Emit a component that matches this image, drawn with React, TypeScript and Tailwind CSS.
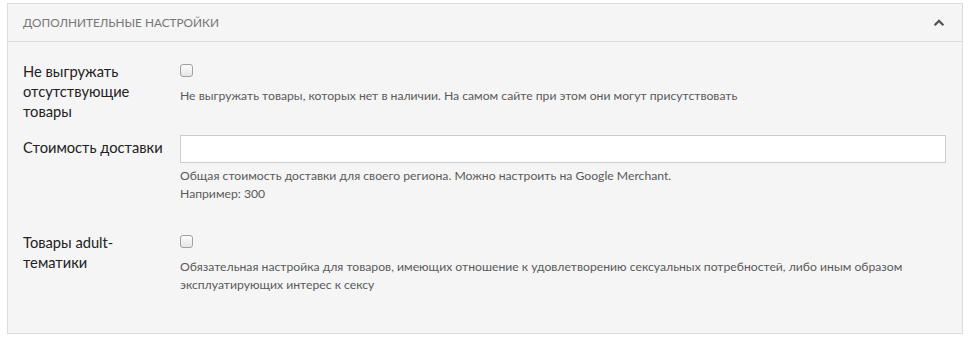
import React from 'react';

const ChevronUp: React.FC = () => (
    <svg width="12" height="9" viewBox="0 0 12 9" className="text-[#555]">
        <path d="M6 1.2 L11.2 6.4 L9.6 8 L6 4.4 L2.4 8 L0.8 6.4 Z" fill="currentColor" />
    </svg>
);

const Checkbox: React.FC = () => (
    <div className="w-[13px] h-[13px] rounded-[3px] border border-[#a0a0a0] bg-gradient-to-b from-[#fdfdfd] to-[#e6e6e6]" />
);

const Help: React.FC<{ children: React.ReactNode }> = ({ children }) => (
    <p className="text-[12.2px] leading-[18px] text-[#5a5a5a]">{children}</p>
);

const App: React.FC = () => {
    return (
        <div className="w-[971px] h-[338px] bg-white pt-[3px] pl-[7px] pr-[8px]" style={{ fontFamily: 'Lato, "Open Sans", sans-serif' }}>
            <div className="border border-[#dddddd] bg-[#f5f5f5] h-[331px]">
                <div className="h-[38px] flex items-center justify-between pl-[15px] pr-[17px] border-b border-[#dddddd]">
                    <span className="text-[11.8px] text-[#777] uppercase">Дополнительные настройки</span>
                    <ChevronUp />
                </div>

                <div className="pl-[15px] pr-[16px] pt-[19px]">
                    <div className="flex">
                        <label className="w-[157px] shrink-0 text-[14.7px] leading-[20px] font-normal text-[#222] pr-4">
                            Не выгружать отсутствующие товары
                        </label>
                        <div className="flex-1">
                            <div className="mt-[3px] mb-[10px]">
                                <Checkbox />
                            </div>
                            <Help>Не выгружать товары, которых нет в наличии. На самом сайте при этом они могут присутствовать</Help>
                        </div>
                    </div>

                    <div className="flex mt-[14px]">
                        <label className="w-[157px] shrink-0 text-[14.7px] leading-[20px] font-normal text-[#222] pt-[2px]">
                            Стоимость доставки
                        </label>
                        <div className="flex-1">
                            <input type="text" className="block w-full h-[28px] bg-white border border-[#cccccc] outline-none" />
                            <div className="mt-[4px]">
                                <Help>Общая стоимость доставки для своего региона. Можно настроить на Google Merchant.</Help>
                                <Help>Например: 300</Help>
                            </div>
                        </div>
                    </div>

                    <div className="flex mt-[29px]">
                        <label className="w-[157px] shrink-0 text-[14.7px] leading-[20px] font-normal text-[#222] pr-10">
                            Товары adult-тематики
                        </label>
                        <div className="flex-1">
                            <div className="mt-[3px] mb-[10px]">
                                <Checkbox />
                            </div>
                            <Help>
                                Обязательная настройка для товаров, имеющих отношение к удовлетворению сексуальных потребностей, либо иным образом эксплуатирующих интерес к сексу
                            </Help>
                        </div>
                    </div>
                </div>
            </div>
        </div>
    );
};

export default App;
